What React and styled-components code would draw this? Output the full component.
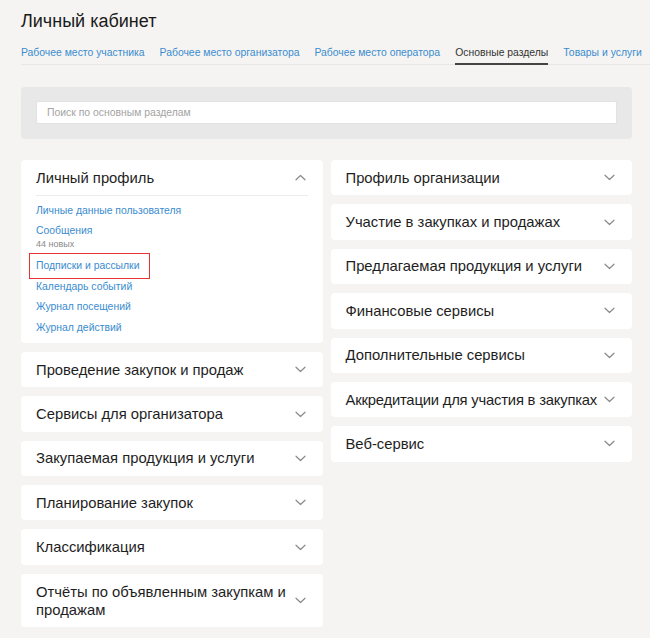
import styled, { createGlobalStyle } from 'styled-components';

const GlobalStyle = createGlobalStyle`
  html, body {
    margin: 0;
    padding: 0;
    background: #f5f4f2;
  }
  body {
    font-family: "Liberation Sans", Arial, sans-serif;
  }
  * {
    box-sizing: border-box;
  }
`;

const tabs = [
  { label: 'Рабочее место участника' },
  { label: 'Рабочее место организатора' },
  { label: 'Рабочее место оператора' },
  { label: 'Основные разделы', active: true },
  { label: 'Товары и услуги' },
];

const leftSections = [
  { title: 'Проведение закупок и продаж' },
  { title: 'Сервисы для организатора' },
  { title: 'Закупаемая продукция и услуги' },
  { title: 'Планирование закупок' },
  { title: 'Классификация' },
  { title: 'Отчёты по объявленным закупкам и продажам' },
];

const rightSections = [
  { title: 'Профиль организации' },
  { title: 'Участие в закупках и продажах' },
  { title: 'Предлагаемая продукция и услуги' },
  { title: 'Финансовые сервисы' },
  { title: 'Дополнительные сервисы' },
  { title: 'Аккредитации для участия в закупках', tight: true },
  { title: 'Веб-сервис' },
];

const Chevron = ({ up }) => (
  <ChevronIcon $up={up} width="11" height="7" viewBox="0 0 11 7" fill="none">
    <path d="M1 1.2l4.5 4.3L10 1.2" stroke="#8a8a8a" strokeWidth="1.2" strokeLinecap="round" strokeLinejoin="round" />
  </ChevronIcon>
);

const Section = ({ title, tight }) => (
  <Card>
    <CardHeader>
      <CardTitle $tight={tight}>{title}</CardTitle>
      <Chevron />
    </CardHeader>
  </Card>
);

const App = () => {
  return (
    <>
      <GlobalStyle />
      <Page>
        <PageTitle>Личный кабинет</PageTitle>
        <TabBar>
          {tabs.map((tab) => (
            <Tab key={tab.label} $active={tab.active}>
              {tab.label}
            </Tab>
          ))}
        </TabBar>

        <SearchPanel>
          <SearchInput placeholder="Поиск по основным разделам" />
        </SearchPanel>

        <Columns>
          <Column>
            <Card>
              <CardHeader $open>
                <CardTitle>Личный профиль</CardTitle>
                <Chevron up />
              </CardHeader>
              <LinkList>
                <LinkItem>Личные данные пользователя</LinkItem>
                <LinkItem>
                  Сообщения
                  <Counter>44 новых</Counter>
                </LinkItem>
                <LinkItem>
                  <Highlight>Подписки и рассылки</Highlight>
                </LinkItem>
                <LinkItem>Календарь событий</LinkItem>
                <LinkItem>Журнал посещений</LinkItem>
                <LinkItem>Журнал действий</LinkItem>
              </LinkList>
            </Card>
            {leftSections.map((s) => (
              <Section key={s.title} {...s} />
            ))}
          </Column>
          <Column>
            {rightSections.map((s) => (
              <Section key={s.title} {...s} />
            ))}
          </Column>
        </Columns>
      </Page>
    </>
  );
};

export default App;

const Page = styled.div`
  padding: 10px 18px 20px 21px;
  overflow: hidden;
`;

const PageTitle = styled.h1`
  margin: 0;
  font-size: 18px;
  line-height: 22px;
  font-weight: normal;
  color: #1a1a1a;
`;

const TabBar = styled.div`
  display: flex;
  gap: 15px;
  margin-top: 13.5px;
  margin-right: -18px;
  border-bottom: 1px solid #e8e7e5;
  white-space: nowrap;
`;

const Tab = styled.span`
  font-size: 10.4px;
  line-height: 13px;
  padding-bottom: 4px;
  margin-bottom: -1px;
  border-bottom: 2px solid ${(p) => (p.$active ? '#444' : 'transparent')};
  color: ${(p) => (p.$active ? '#333' : '#3a8ccf')};
  cursor: pointer;
`;

const SearchPanel = styled.div`
  margin-top: 22.5px;
  padding: 14px 15px 15px;
  background: #e8e8e8;
  border-radius: 4px;
`;

const SearchInput = styled.input`
  display: block;
  width: 100%;
  height: 23px;
  padding: 0 10px;
  border: 1px solid #e2e2e2;
  border-radius: 2px;
  background: #fff;
  font-family: "Liberation Sans", Arial, sans-serif;
  font-size: 10.4px;
  color: #333;
  outline: 0;

  &::placeholder {
    color: #a3a3a3;
  }
`;

const Columns = styled.div`
  display: grid;
  grid-template-columns: 1fr 1fr;
  gap: 8px;
  margin-top: 21px;
  align-items: start;
`;

const Column = styled.div`
  display: flex;
  flex-direction: column;
  gap: 9px;
`;

const Card = styled.div`
  background: #fff;
  border-radius: 4px;
  padding: 0 15px;
`;

const CardHeader = styled.div`
  display: flex;
  align-items: center;
  padding: 8.7px 0;
  border-bottom: ${(p) => (p.$open ? '1px solid #ececec' : '0')};
`;

const CardTitle = styled.span`
  flex: 1;
  min-width: 0;
  font-size: 14.8px;
  line-height: 18px;
  color: #1e1e1e;
  white-space: ${(p) => (p.$tight ? 'nowrap' : 'normal')};
  letter-spacing: ${(p) => (p.$tight ? '-0.2px' : 'normal')};
`;

const ChevronIcon = styled.svg`
  flex-shrink: 0;
  margin-left: 2px;
  margin-right: 2px;
  transform: ${(p) => (p.$up ? 'rotate(180deg)' : 'none')};
`;

const LinkList = styled.div`
  display: flex;
  flex-direction: column;
  padding: 4.6px 0 4.5px;
`;

const LinkItem = styled.div`
  display: flex;
  flex-direction: column;
  align-items: flex-start;
  font-size: 10.4px;
  line-height: 20.5px;
  color: #3a8ccf;
  cursor: pointer;
`;

const Counter = styled.span`
  margin-top: -2.5px;
  margin-bottom: 6px;
  font-size: 9px;
  line-height: 11px;
  color: #8a8a8a;
`;

const Highlight = styled.span`
  position: relative;

  &::after {
    content: '';
    position: absolute;
    top: -3.5px;
    bottom: -2px;
    left: -7px;
    right: -11px;
    border: 1.5px solid #e3342f;
    pointer-events: none;
  }
`;
